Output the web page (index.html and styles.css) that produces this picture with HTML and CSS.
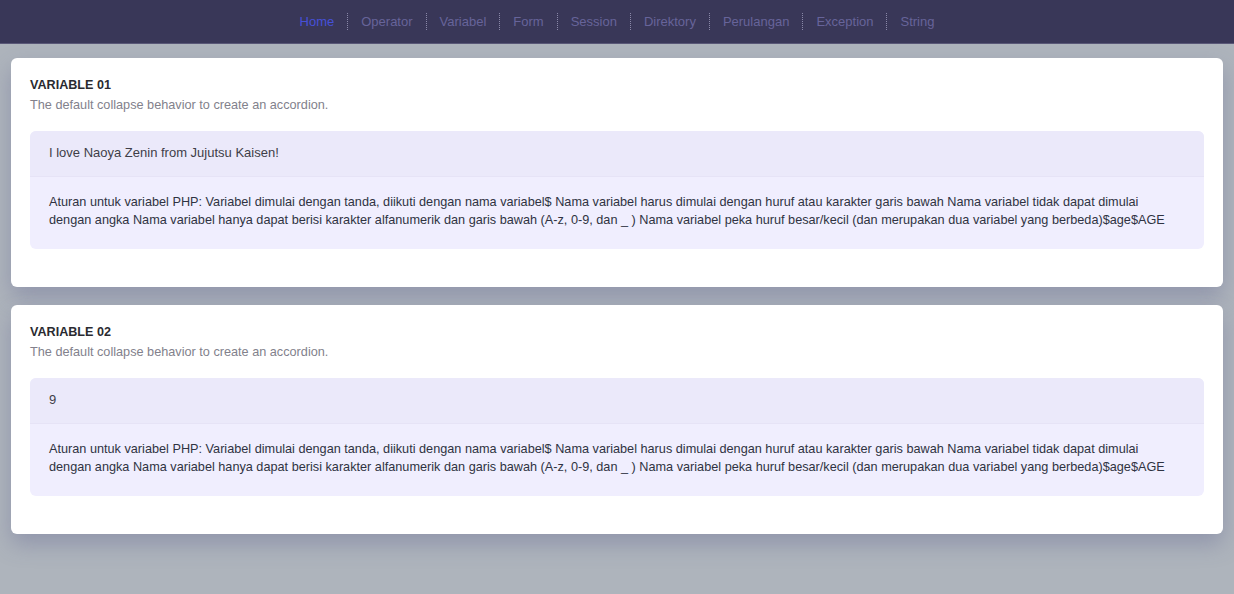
FILE: index.html
```html
<!DOCTYPE html>
<html lang="id">
<head>
<meta charset="utf-8">
<title>Variabel</title>
<link rel="stylesheet" href="styles.css">
</head>
<body>
<nav class="navbar">
  <a class="nav-link active" href="#">Home</a>
  <span class="sep"></span>
  <a class="nav-link" href="#">Operator</a>
  <span class="sep"></span>
  <a class="nav-link" href="#">Variabel</a>
  <span class="sep"></span>
  <a class="nav-link" href="#">Form</a>
  <span class="sep"></span>
  <a class="nav-link" href="#">Session</a>
  <span class="sep"></span>
  <a class="nav-link" href="#">Direktory</a>
  <span class="sep"></span>
  <a class="nav-link" href="#">Perulangan</a>
  <span class="sep"></span>
  <a class="nav-link" href="#">Exception</a>
  <span class="sep"></span>
  <a class="nav-link" href="#">String</a>
</nav>
<main class="content">
  <section class="card">
    <h2 class="card-title">VARIABLE 01</h2>
    <p class="card-sub">The default collapse behavior to create an accordion.</p>
    <div class="panel">
      <div class="panel-head">I love Naoya Zenin from Jujutsu Kaisen!</div>
      <div class="panel-body">Aturan untuk variabel PHP: Variabel dimulai dengan tanda, diikuti dengan nama variabel$ Nama variabel harus dimulai dengan huruf atau karakter garis bawah Nama variabel tidak dapat dimulai dengan angka Nama variabel hanya dapat berisi karakter alfanumerik dan garis bawah (A-z, 0-9, dan _ ) Nama variabel peka huruf besar/kecil (dan merupakan dua variabel yang berbeda)$age$AGE</div>
    </div>
  </section>
  <section class="card">
    <h2 class="card-title">VARIABLE 02</h2>
    <p class="card-sub">The default collapse behavior to create an accordion.</p>
    <div class="panel">
      <div class="panel-head">9</div>
      <div class="panel-body">Aturan untuk variabel PHP: Variabel dimulai dengan tanda, diikuti dengan nama variabel$ Nama variabel harus dimulai dengan huruf atau karakter garis bawah Nama variabel tidak dapat dimulai dengan angka Nama variabel hanya dapat berisi karakter alfanumerik dan garis bawah (A-z, 0-9, dan _ ) Nama variabel peka huruf besar/kecil (dan merupakan dua variabel yang berbeda)$age$AGE</div>
    </div>
  </section>
</main>
</body>
</html>
```
FILE: styles.css
```css
* { box-sizing: border-box; }
html, body {
  margin: 0;
  padding: 0;
  height: 100%;
}
body {
  background: #aeb4bc;
  font-family: "Liberation Sans", Arial, sans-serif;
  color: #333;
}
.navbar {
  height: 43px;
  background: #393758;
  display: flex;
  align-items: center;
  justify-content: center;
  gap: 13px;
  box-shadow: 0 1px 0 #5a5878;
}
.nav-link {
  font-size: 13px;
  color: #67649a;
  text-decoration: none;
}
.nav-link.active {
  color: #4650d8;
}
.sep {
  width: 0;
  height: 17px;
  border-left: 1px dotted #8a88a8;
}
.content {
  padding: 15px 11px;
  display: flex;
  flex-direction: column;
  gap: 18px;
}
.card {
  background: #fff;
  border-radius: 6px;
  padding: 19px 19px 38px;
  box-shadow: 0 10px 22px rgba(90, 92, 140, 0.35);
}
.card-title {
  margin: 0;
  font-size: 12.6px;
  font-weight: bold;
  color: #2a2a30;
  line-height: 16px;
}
.card-sub {
  margin: 4px 0 18px;
  font-size: 12.7px;
  color: #82818c;
  line-height: 16px;
}
.panel {
  border-radius: 6px;
  overflow: hidden;
  background: #f0eefe;
}
.panel-head {
  background: #ebe9fa;
  font-size: 13px;
  line-height: 18px;
  padding: 13px 19px 14px;
  color: #3e3e48;
  border-bottom: 1px solid #e6e3f6;
}
.panel-body {
  font-size: 12.7px;
  line-height: 18px;
  padding: 16px 20px 20px 19px;
  color: #2f3342;
}
```
